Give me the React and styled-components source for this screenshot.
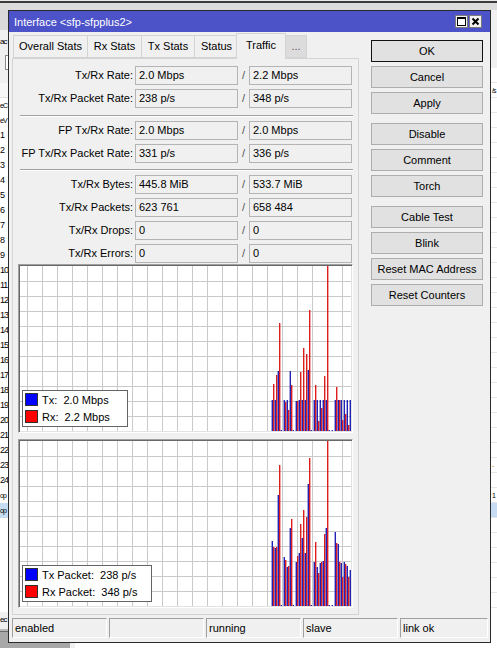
import React from "react";
import styled, { createGlobalStyle } from "styled-components";

const GlobalStyle = createGlobalStyle`
  html, body { margin: 0; padding: 0; }
  body {
    background: #f0f0f0;
    font-family: "Liberation Sans", Arial, sans-serif;
    font-size: 11px;
    color: #000;
  }
  * { box-sizing: border-box; }
`;

/* ---------- desktop / background window ---------- */
const Desktop = styled.div`
  position: relative;
  width: 497px;
  height: 648px;
  overflow: hidden;
  background: #f0f0f0;
  display: flex;
  flex-direction: column;
`;
const BgTop = styled.div`
  height: 10px;
  flex: none;
  background: linear-gradient(#e8e8e8 0 1px, #3c3c3c 1px 3px, #dcdcdc 3px);
`;
const BgMain = styled.div`
  flex: 1;
  display: flex;
  min-height: 0;
`;
const LeftStrip = styled.div`
  width: 8px;
  flex: none;
  display: flex;
  flex-direction: column;
  overflow: hidden;
`;
const LeftToolbar = styled.div`
  height: 20px;
  background: #dadada;
`;
const LeftLabel = styled.div`
  height: 25px;
  padding-top: 6px;
  line-height: 12px;
  font-size: 8px;
  letter-spacing: -1px;
  white-space: nowrap;
`;
const LeftField = styled.div`
  height: 15px;
  margin-left: 5px;
  background: #fff;
  border: 1px solid #8a8a8a;
  border-right: none;
`;
const LeftList = styled.div`
  flex: 1;
  margin-top: 13px;
  background: #fff;
  display: flex;
  flex-direction: column;
`;
const ListHeader = styled.div`
  height: 15px;
  background: #f7f7f7;
  border-bottom: 1px solid #e2e2e2;
`;
const ListRow = styled.div`
  height: 15px;
  line-height: 15px;
  font-size: ${(p) => p.$fs || 9}px;
  letter-spacing: -1px;
  white-space: nowrap;
  padding-left: ${(p) => p.$pl || 0}px;
  background: ${(p) => (p.$sel ? "#c5dcf3" : "#fff")};
  color: ${(p) => p.$color || "#000"};
  border-bottom: ${(p) => (p.$lines ? "1px solid #e6e6e6" : "none")};
`;
const LeftStatus = styled.div`
  height: 19px;
  line-height: 16px;
  font-size: 8px;
  letter-spacing: -1px;
  white-space: nowrap;
  border-bottom: 2px solid #b8b8b8;
`;
const Behind = styled.div`
  flex: 1;
`;
const RightStrip = styled.div`
  width: 6px;
  flex: none;
  display: flex;
  flex-direction: column;
  overflow: hidden;
`;
const RightTop = styled.div`
  height: 58px;
  background: #f0f0f0;
`;
const RightList = styled.div`
  flex: 1;
  background: #fff;
  display: flex;
  flex-direction: column;
`;
const BgBottom = styled.div`
  height: 17px;
  flex: none;
  display: flex;
`;
const BottomBox = styled.div`
  width: 70px;
  background: #a8a8a8;
  border-top: 1px solid #6a6a6a;
`;
const BottomRest = styled.div`
  flex: 1;
  background: #fff;
  border-left: 5px solid #f0f0f0;
`;

/* ---------- the dialog window ---------- */
const Window = styled.div`
  position: absolute;
  left: 8px;
  top: 10px;
  width: 483px;
  height: 633px;
  border: 1px solid #2a2a2a;
  background: #f0f0f0;
  display: flex;
  flex-direction: column;
`;
const TitleBar = styled.div`
  height: 21px;
  flex: none;
  background: #4c52c8;
  color: #fff;
  display: flex;
  align-items: center;
  padding-left: 5px;
  font-size: 11px;
`;
const TitleText = styled.span`
  flex: 1;
  white-space: nowrap;
`;
const TitleButtons = styled.div`
  display: flex;
  gap: 1px;
  margin-right: 8px;
`;
const TitleBtn = styled.svg`
  display: block;
`;

const Body = styled.div`
  flex: 1;
  min-height: 0;
  display: flex;
  padding: 1px 7px 3px 3px;
`;
const LeftCol = styled.div`
  width: 347px;
  flex: none;
  display: flex;
  flex-direction: column;
`;
const TabStrip = styled.div`
  height: 25px;
  flex: none;
  display: flex;
  align-items: flex-end;
  padding-left: 1px;
  position: relative;
  z-index: 1;
`;
const Tab = styled.div`
  width: ${(p) => p.$w}px;
  height: ${(p) => (p.$active ? 26 : 23)}px;
  margin-left: ${(p) => (p.$ml !== undefined ? p.$ml : -1)}px;
  margin-right: ${(p) => (p.$active ? -2 : 0)}px;
  margin-bottom: ${(p) => (p.$active ? -1 : 0)}px;
  border: 1px solid #d4d4d4;
  border-bottom: ${(p) => (p.$active ? "none" : "1px solid #d4d4d4")};
  background: ${(p) => (p.$dim ? "#dcdcdc" : "#f0f0f0")};
  position: relative;
  z-index: ${(p) => (p.$active ? 2 : 1)};
  text-align: center;
  line-height: ${(p) => (p.$active ? 22 : 21)}px;
  white-space: nowrap;
  color: ${(p) => (p.$dim ? "#555" : "#000")};
  &:first-child { margin-left: 0; }
`;
const Panel = styled.div`
  flex: 1;
  min-height: 0;
  border: 1px solid #d4d4d4;
  background: #f0f0f0;
  padding: 7px 5px 6px 5px;
  display: flex;
  flex-direction: column;
`;
const Row = styled.div`
  display: grid;
  grid-template-columns: 117px 103px 11px 103px;
  height: 19px;
  margin-bottom: ${(p) => (p.$mb !== undefined ? p.$mb : 4)}px;
  flex: none;
`;
const Label = styled.div`
  text-align: right;
  padding-right: 2px;
  line-height: 19px;
  white-space: nowrap;
`;
const Field = styled.div`
  border: 1px solid #b4b4b4;
  background: #f0f0f0;
  padding-left: 3px;
  line-height: 17px;
  white-space: nowrap;
  overflow: hidden;
`;
const Slash = styled.div`
  text-align: center;
  line-height: 19px;
  color: #555;
`;
const Separator = styled.div`
  height: 2px;
  flex: none;
  margin: ${(p) => p.$top}px 0 4px 2px;
  border-top: 1px solid #a0a0a0;
  border-bottom: 1px solid #fff;
`;
const GraphFrame = styled.div`
  position: relative;
  width: 335px;
  height: 169px;
  flex: none;
  margin-top: ${(p) => p.$mt || 0}px;
  border: 1px solid;
  border-color: #a0a0a0 #ffffff #ffffff #a0a0a0;
  box-shadow: inset 1px 1px 0 #696969, inset -1px -1px 0 #e3e3e3;
  padding: 1px;
`;
const ChartSvg = styled.svg`
  display: block;
`;
const Legend = styled.div`
  position: absolute;
  left: 3px;
  bottom: 5px;
  width: ${(p) => p.$w}px;
  height: 37px;
  background: #fff;
  border: 1px solid #646464;
  padding: 2px 2px;
  display: flex;
  flex-direction: column;
  gap: 4px;
`;
const LegendItem = styled.div`
  display: flex;
  align-items: center;
  height: 13px;
  gap: 4px;
  white-space: pre;
  font-size: 11px;
`;
const Swatch = styled.span`
  width: 13px;
  height: 13px;
  flex: none;
  background: ${(p) => p.$c};
  border: 1px solid #303030;
`;

const ButtonCol = styled.div`
  width: 112px;
  flex: none;
  margin-left: 12px;
  padding-top: 7px;
  display: flex;
  flex-direction: column;
`;
const Button = styled.div`
  height: 22px;
  flex: none;
  margin-top: ${(p) => (p.$first ? 0 : p.$group ? 9 : 4)}px;
  background: #e1e1e1;
  border: 1px solid ${(p) => (p.$default ? "#111" : "#adadad")};
  text-align: center;
  line-height: 20px;
  white-space: nowrap;
`;

const StatusBar = styled.div`
  height: 20px;
  flex: none;
  margin-bottom: 4px;
  padding-left: 3px;
  display: grid;
  grid-template-columns: 95px 95px 95px 95px 88px;
  column-gap: 2px;
`;
const StatusCell = styled.div`
  border: 1px solid;
  border-color: #a0a0a0 #ffffff #ffffff #a0a0a0;
  padding-left: 2px;
  line-height: 18px;
  white-space: nowrap;
`;

/* ---------- data ---------- */
const traffic = [
  [31, 47], [31, 56], [60, 108], [1, 0], [31, 29], [31, 21], [60, 46],
  [1, 0], [30, 30], [31, 59], [31, 83], [31, 77], [61, 121], [1, 0],
  [31, 46], [31, 10], [31, 23], [31, 55], [31, 165], [1, 0], [1, 0],
  [31, 44], [31, 31], [31, 11], [31, 17], [31, 6], [31, 34],
];
const packets = [
  [65, 59], [58, 59], [111, 141], [1, 0], [49, 46], [39, 40], [78, 87], [1, 0],
  [44, 50], [53, 82], [68, 96], [53, 89], [122, 148], [1, 0], [44, 64],
  [39, 33], [43, 44], [45, 72], [78, 165], [1, 0], [1, 0], [74, 63],
  [62, 44], [43, 29], [44, 42], [40, 29], [36, 53],
];

const W = 331;
const H = 165;
const vLines = Array.from({ length: 22 }, (_, i) => 7 + 15 * i);
const hLines = Array.from({ length: 10 }, (_, i) => 15 + 15 * i);

function Chart({ data }) {
  return (
    <ChartSvg width={W} height={H} viewBox={`0 0 ${W} ${H}`}>
      <rect width={W} height={H} fill="#fff" />
      <g shapeRendering="crispEdges">
        {vLines.map((x) => (
          <rect key={"v" + x} x={x} y={0} width={1} height={H} fill="#c9c9c9" />
        ))}
        {hLines.map((y) => (
          <rect key={"h" + y} x={0} y={y} width={W} height={1} fill="#c9c9c9" />
        ))}
      </g>
      {data.map(([b, r], i) => {
        const x = 251.6 + 3 * i;
        return (
          <g key={i}>
            <rect x={x} y={H - b} width={1.4} height={b} fill="#2222b4" />
            <rect x={x + 1.4} y={H - r} width={1.4} height={r} fill="#dc1e1e" />
          </g>
        );
      })}
    </ChartSvg>
  );
}

const leftRows = ["eC", "eV", ...Array.from({ length: 24 }, (_, i) => String(i + 1)), "op", "op"];

const rightRows = Array.from({ length: 36 }, (_, i) => i);

const tabs = [
  { t: "Overall Stats", w: 75 },
  { t: "Rx Stats", w: 55 },
  { t: "Tx Stats", w: 54 },
  { t: "Status", w: 45 },
  { t: "Traffic", w: 50, active: true, ml: -3 },
  { t: "...", w: 22, dim: true, ml: 1 },
];

export default function App() {
  return (
    <>
      <GlobalStyle />
      <Desktop>
        <BgTop />
        <BgMain>
          <LeftStrip>
            <LeftToolbar />
            <LeftLabel>ac</LeftLabel>
            <LeftField />
            <LeftList>
              <ListHeader />
              {leftRows.map((r, i) => (
                <ListRow
                  key={i}
                  $sel={i === leftRows.length - 1}
                  $fs={isNaN(r) ? 7 : 9}
                >
                  {r}
                </ListRow>
              ))}
            </LeftList>
            <LeftStatus>ec</LeftStatus>
          </LeftStrip>
          <Behind />
          <RightStrip>
            <RightTop />
            <RightList>
              {rightRows.map((i) => (
                <ListRow
                  key={i}
                  $lines
                  $pl={1}
                  $fs={7}
                  $sel={i === 29}
                  $color={i === 26 ? "#d07a10" : "#000"}
                >
                  {i === 1 ? "/s" : i === 26 ? "-" : i === 28 ? "1" : ""}
                </ListRow>
              ))}
            </RightList>
          </RightStrip>
        </BgMain>
        <BgBottom>
          <BottomBox />
          <BottomRest />
        </BgBottom>

        <Window>
          <TitleBar>
            <TitleText>{"Interface <sfp-sfpplus2>"}</TitleText>
            <TitleButtons>
              <TitleBtn width="13" height="13" viewBox="0 0 13 13">
                <rect x="0.5" y="0.5" width="12" height="12" fill="#f2f2f2" stroke="#7a7a7a" />
                <rect x="2.5" y="2.5" width="8" height="8" fill="#fff" stroke="#000" />
                <line x1="2.5" y1="3.5" x2="10.5" y2="3.5" stroke="#000" />
              </TitleBtn>
              <TitleBtn width="13" height="13" viewBox="0 0 13 13">
                <rect x="0.5" y="0.5" width="12" height="12" fill="#f2f2f2" stroke="#7a7a7a" />
                <path d="M3.5 3.5 L9.5 9.5 M9.5 3.5 L3.5 9.5" stroke="#000" strokeWidth="2" />
              </TitleBtn>
            </TitleButtons>
          </TitleBar>

          <Body>
            <LeftCol>
              <TabStrip>
                {tabs.map((t) => (
                  <Tab key={t.t} $w={t.w} $active={t.active} $dim={t.dim} $ml={t.ml}>
                    {t.t}
                  </Tab>
                ))}
              </TabStrip>
              <Panel>
                <Row>
                  <Label>Tx/Rx Rate:</Label>
                  <Field>2.0 Mbps</Field>
                  <Slash>/</Slash>
                  <Field>2.2 Mbps</Field>
                </Row>
                <Row>
                  <Label>Tx/Rx Packet Rate:</Label>
                  <Field>238 p/s</Field>
                  <Slash>/</Slash>
                  <Field>348 p/s</Field>
                </Row>
                <Separator $top={3} />
                <Row>
                  <Label>FP Tx/Rx Rate:</Label>
                  <Field>2.0 Mbps</Field>
                  <Slash>/</Slash>
                  <Field>2.0 Mbps</Field>
                </Row>
                <Row>
                  <Label>FP Tx/Rx Packet Rate:</Label>
                  <Field>331 p/s</Field>
                  <Slash>/</Slash>
                  <Field>336 p/s</Field>
                </Row>
                <Separator $top={2} />
                <Row>
                  <Label>Tx/Rx Bytes:</Label>
                  <Field>445.8 MiB</Field>
                  <Slash>/</Slash>
                  <Field>533.7 MiB</Field>
                </Row>
                <Row>
                  <Label>Tx/Rx Packets:</Label>
                  <Field>623 761</Field>
                  <Slash>/</Slash>
                  <Field>658 484</Field>
                </Row>
                <Row>
                  <Label>Tx/Rx Drops:</Label>
                  <Field>0</Field>
                  <Slash>/</Slash>
                  <Field>0</Field>
                </Row>
                <Row $mb={1}>
                  <Label>Tx/Rx Errors:</Label>
                  <Field>0</Field>
                  <Slash>/</Slash>
                  <Field>0</Field>
                </Row>

                <GraphFrame>
                  <Chart data={traffic} />
                  <Legend $w={106}>
                    <LegendItem>
                      <Swatch $c="#0000ff" />
                      {"Tx:  2.0 Mbps"}
                    </LegendItem>
                    <LegendItem>
                      <Swatch $c="#ff0000" />
                      {"Rx:  2.2 Mbps"}
                    </LegendItem>
                  </Legend>
                </GraphFrame>
                <GraphFrame $mt={6}>
                  <Chart data={packets} />
                  <Legend $w={130}>
                    <LegendItem>
                      <Swatch $c="#0000ff" />
                      {"Tx Packet:  238 p/s"}
                    </LegendItem>
                    <LegendItem>
                      <Swatch $c="#ff0000" />
                      {"Rx Packet:  348 p/s"}
                    </LegendItem>
                  </Legend>
                </GraphFrame>
              </Panel>
            </LeftCol>

            <ButtonCol>
              <Button $first $default>OK</Button>
              <Button>Cancel</Button>
              <Button>Apply</Button>
              <Button $group>Disable</Button>
              <Button>Comment</Button>
              <Button>Torch</Button>
              <Button $group>Cable Test</Button>
              <Button>Blink</Button>
              <Button>Reset MAC Address</Button>
              <Button>Reset Counters</Button>
            </ButtonCol>
          </Body>

          <StatusBar>
            <StatusCell>enabled</StatusCell>
            <StatusCell />
            <StatusCell>running</StatusCell>
            <StatusCell>slave</StatusCell>
            <StatusCell>link ok</StatusCell>
          </StatusBar>
        </Window>
      </Desktop>
    </>
  );
}
